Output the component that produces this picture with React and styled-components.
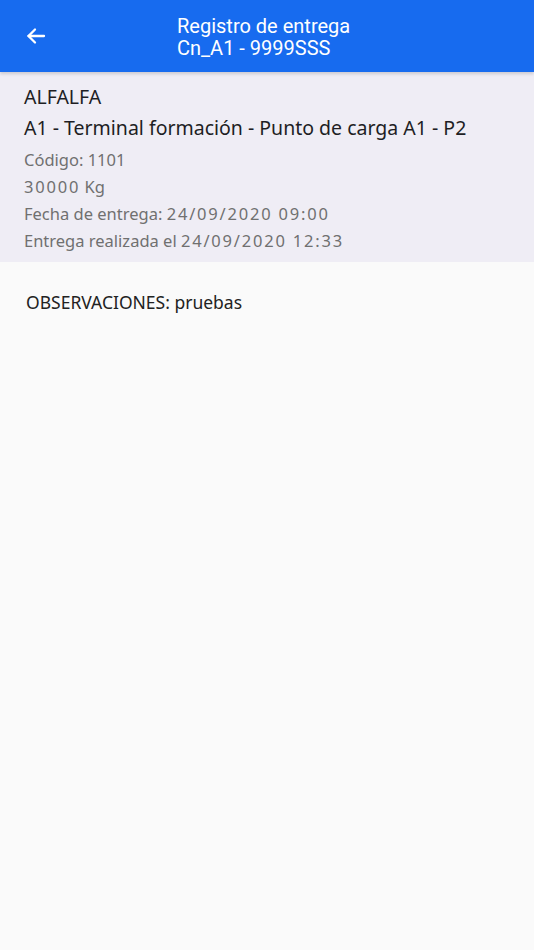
import React from "react";
import styled, { createGlobalStyle } from "styled-components";

const Global = createGlobalStyle`
  html, body { margin: 0; padding: 0; background: #fafafa; }
  body { font-family: "Noto Sans", sans-serif; }
`;

const Page = styled.div`
  min-height: 950px;
  background: #fafafa;
  display: flex;
  flex-direction: column;
`;

const Header = styled.header`
  height: 72px;
  background: #176bef;
  display: flex;
  align-items: center;
  box-shadow: 0 2px 3px rgba(0, 0, 0, 0.15);
  position: relative;
  z-index: 1;
`;

const BackButton = styled.button`
  width: 72px;
  height: 72px;
  border: none;
  background: transparent;
  display: flex;
  align-items: center;
  justify-content: center;
  padding: 0;
  color: #fff;
`;

const Titles = styled.div`
  margin-left: 105px;
  display: flex;
  flex-direction: column;
  color: #fff;
  font-family: Roboto, sans-serif;
  font-size: 20px;
  line-height: 22px;
  padding-top: 2px;
`;

const Card = styled.section`
  background: #efedf5;
  padding: 12px 24px 8px;
  display: flex;
  flex-direction: column;
`;

const Line = styled.div`
  font-size: ${(p) => p.$size}px;
  line-height: ${(p) => p.$lh}px;
  color: ${(p) => p.$color};
  white-space: nowrap;
`;

const Num = styled.span`
  letter-spacing: 1.8px;
`;

const Obs = styled.div`
  padding: 28px 26px;
  font-size: 17.5px;
  line-height: 24px;
  color: #222;
`;

export default function App() {
  return (
    <Page>
      <Global />
      <Header>
        <BackButton aria-label="Volver">
          <svg width="24" height="24" viewBox="0 0 24 24" fill="none" stroke="#fff" strokeWidth="2.3" strokeLinecap="round" strokeLinejoin="round">
            <path d="M20 12H4.5" />
            <path d="M11 5.5L4.5 12L11 18.5" />
          </svg>
        </BackButton>
        <Titles>
          <span>Registro de entrega</span>
          <span>Cn_A1 - 9999SSS</span>
        </Titles>
      </Header>
      <Card>
        <Line $size={19.5} $lh={26} $color="#1e1e24">ALFALFA</Line>
        <Line $size={19.5} $lh={36} $color="#1e1e24">A1 - Terminal formación - Punto de carga A1 - P2</Line>
        <Line $size={16.5} $lh={27} $color="#707070">Código: 1101</Line>
        <Line $size={16.5} $lh={27} $color="#707070"><Num>30000</Num> Kg</Line>
        <Line $size={16.5} $lh={27} $color="#707070">Fecha de entrega: <Num>24/09/2020 09:00</Num></Line>
        <Line $size={16.5} $lh={27} $color="#707070">Entrega realizada el <Num>24/09/2020 12:33</Num></Line>
      </Card>
      <Obs>OBSERVACIONES: pruebas</Obs>
    </Page>
  );
}
